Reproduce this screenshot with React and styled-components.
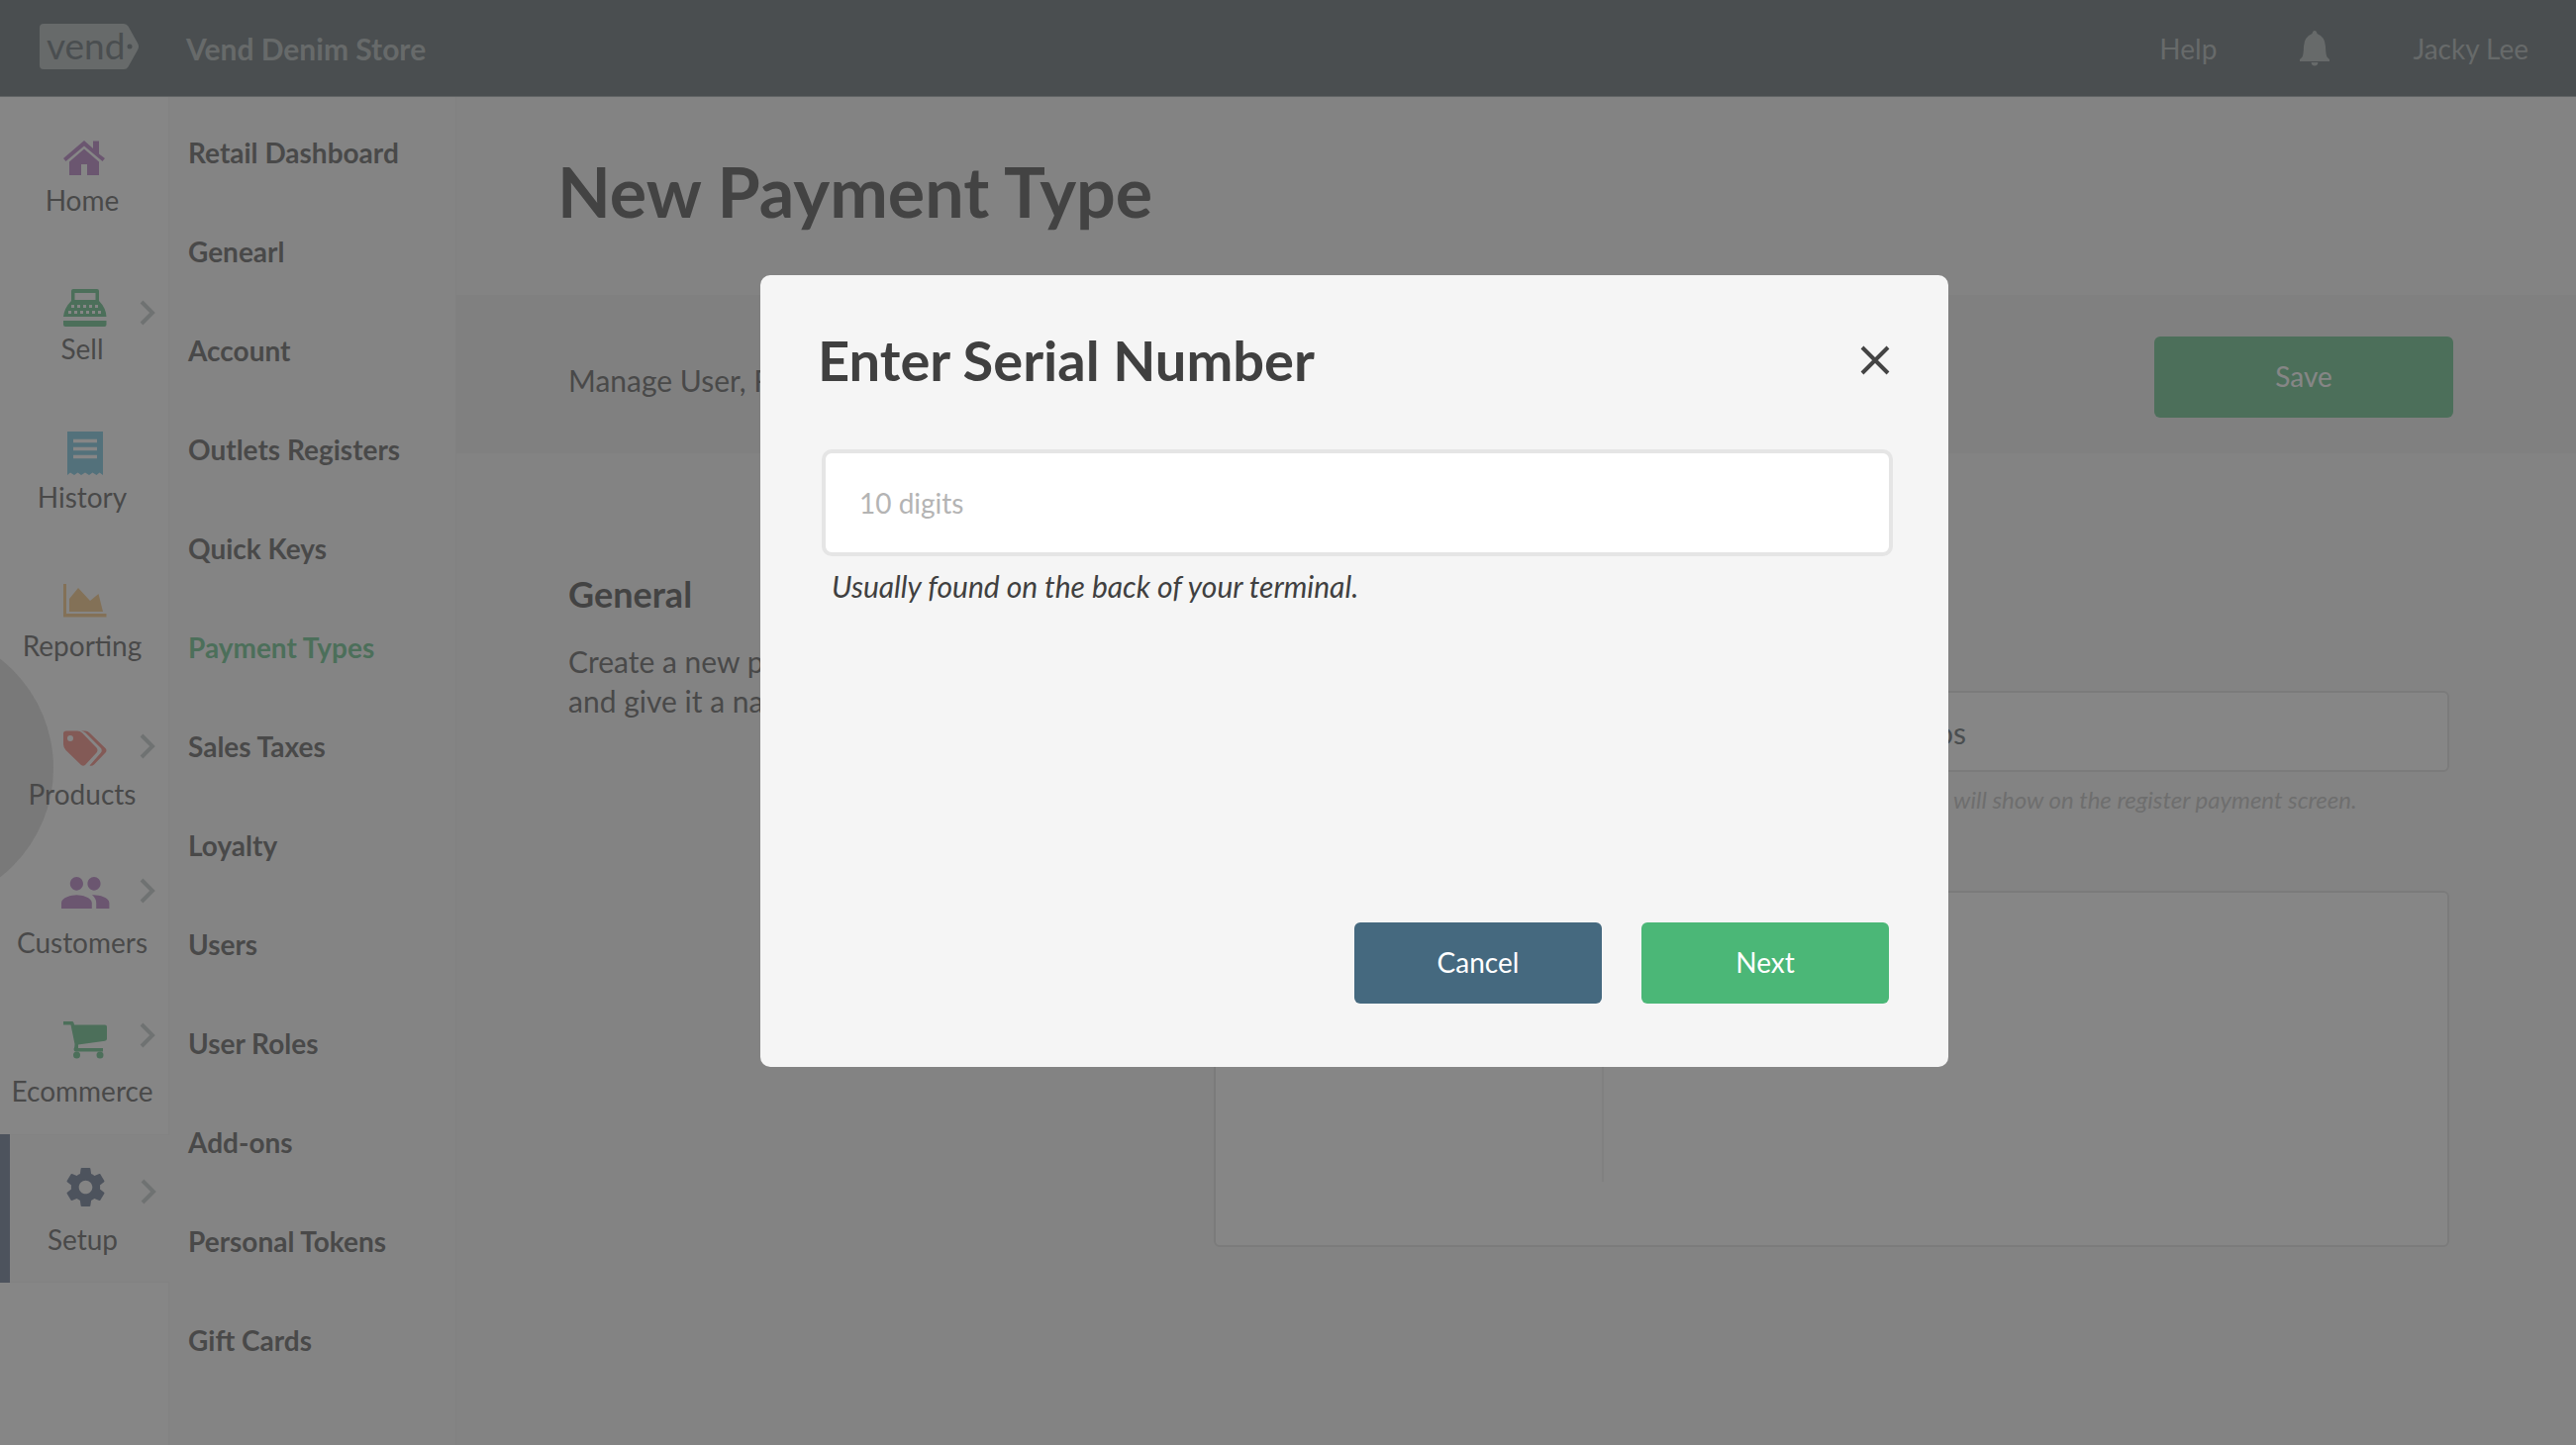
import React from "react";
import styled, { createGlobalStyle } from "styled-components";

const GlobalStyle = createGlobalStyle`
  *, *::before, *::after { box-sizing: border-box; }
  body { margin: 0; background: #f5f5f5; }
  body, button, input { font-family: Lato, "Liberation Sans", sans-serif; }
  h1, h2, p, ul { margin: 0; padding: 0; font-weight: 400; }
  ul { list-style: none; }
  a { color: inherit; text-decoration: none; }
  svg { display: block; }
`;

const Page = styled.div`
  min-height: 100vh;
  display: flex;
  flex-direction: column;
  color: #434343;
`;

const TopBar = styled.header`
  position: relative;
  z-index: 1;
  height: 98px;
  display: flex;
  align-items: center;
  padding: 0 48px 0 40px;
  background: #455157;
  border-bottom: 1px solid #8c969a;
  color: #9ea8a8;
`;

const Logo = styled.svg`
  width: 100px;
  height: 46px;
  margin-bottom: 3px;
`;

const StoreName = styled.span`
  margin-left: 48px;
  font-size: 30px;
  font-weight: 700;
`;

const TopLinks = styled.nav`
  margin-left: auto;
  display: flex;
  align-items: center;
  gap: 84px;
  font-size: 28px;
`;

const IconButton = styled.button`
  padding: 0;
  border: 0;
  background: none;
  color: inherit;
  cursor: pointer;
`;

const Body = styled.div`
  flex: 1;
  display: flex;
`;

const Rail = styled.nav`
  width: 171px;
  background: #ffffff;
  border-right: 1px solid #f2f2f2;
`;

const RailList = styled.ul`
  margin-top: -2px;
`;

const RailLink = styled.a`
  height: 150px;
  display: flex;
  flex-direction: column;
  align-items: center;
  padding-top: 32px;
  font-size: 28px;
  line-height: 36px;
  color: #434343;
  ${({ $active }) =>
    $active &&
    `
    width: 171px;
    background: #f8f8f8;
    box-shadow: inset 10px 0 0 #4f6080, inset 0 1px 0 #f2f2f2, inset 0 -1px 0 #f2f2f2;
  `}
`;

const RailLabel = styled.span`
  padding-right: 4px;
`;

const SubNav = styled.nav`
  width: 290px;
  padding: 6px 0 0 19px;
  background: #f9f9f9;
  border-right: 1px solid #f0f0f0;
`;

const SubLink = styled.a`
  display: block;
  font-size: 28px;
  font-weight: 700;
  line-height: 100px;
  color: ${({ $active }) => ($active ? "#4bb777" : "#434343")};
`;

const Main = styled.main`
  flex: 1;
  min-width: 0;
`;

const PageTitle = styled.h1`
  padding: 45px 102px 55px;
  font-size: 70px;
  line-height: 100px;
  font-weight: 700;
  color: #303030;
`;

const ActionBand = styled.section`
  display: flex;
  align-items: center;
  justify-content: space-between;
  padding: 42px 124px 36px 113px;
  background: #ececec;
  font-size: 30px;
`;

const BandText = styled.p`
  padding-top: 6px;
`;

const Button = styled.button`
  width: ${({ $wide }) => ($wide ? "302px" : "250px")};
  height: 82px;
  padding: 0 0 2px;
  border: 0;
  border-radius: 6px;
  background: ${({ $tone }) => ($tone === "slate" ? "#45697f" : "#4bb777")};
  color: #ffffff;
  font-size: 28px;
  cursor: pointer;
`;

const Section = styled.section`
  display: flex;
  padding: 112px 128px 0 113px;
`;

const Intro = styled.div`
  width: 652px;
`;

const SectionTitle = styled.h2`
  font-size: 36px;
  line-height: 60px;
  font-weight: 700;
  color: #303030;
`;

const SectionText = styled.p`
  margin-top: 18px;
  font-size: 30px;
  line-height: 40px;
`;

const Fields = styled.div`
  flex: 1;
  display: flex;
  flex-direction: column;
  align-items: flex-end;
  padding-top: 128px;
`;

const NameField = styled.div`
  width: 628px;
  display: flex;
  flex-direction: column;
`;

const NameInput = styled.input`
  width: 100%;
  height: 82px;
  padding: 2px 54px 0;
  border: 2px solid #dcdcdc;
  border-radius: 6px;
  background: #ffffff;
  color: #455157;
  font-size: 30px;
`;

const NameHint = styled.label`
  margin-top: 10px;
  padding-left: 20px;
  font-size: 24px;
  line-height: 36px;
  font-style: italic;
  color: #b4b4b4;
`;

const Panel = styled.div`
  align-self: stretch;
  height: 360px;
  margin-top: 74px;
  padding: 64px 0;
  border: 2px solid #dcdcdc;
  border-radius: 6px;
  background: #ffffff;
`;

const PanelSide = styled.div`
  width: 392px;
  height: 100%;
  border-right: 2px solid #ebebeb;
`;

const Overlay = styled.div`
  position: fixed;
  inset: 0;
  z-index: 2;
  overflow: hidden;
  display: flex;
  justify-content: center;
  align-items: flex-start;
  padding: 278px 0 0 134px;
  background: rgba(76, 76, 76, 0.68);
`;

const TouchSpot = styled.div`
  position: absolute;
  left: -226px;
  top: 636px;
  width: 280px;
  height: 280px;
  border-radius: 50%;
  background: rgba(70, 70, 70, 0.2);
`;

const Dialog = styled.form`
  width: 1200px;
  min-height: 800px;
  display: flex;
  flex-direction: column;
  padding: 46px 56px 64px 62px;
  border-radius: 10px;
  background: #f5f5f5;
  color: #404040;
`;

const DialogHead = styled.div`
  display: flex;
  align-items: center;
  justify-content: space-between;
  margin-left: -4px;
  padding-right: 3px;
`;

const DialogTitle = styled.h2`
  font-size: 56px;
  line-height: 80px;
  font-weight: 700;
`;

const SerialInput = styled.input`
  width: 100%;
  height: 108px;
  margin-top: 50px;
  padding: 0 34px;
  border: 4px solid #e5e5e5;
  border-radius: 10px;
  background: #ffffff;
  font-size: 28px;
  &::placeholder { color: #b4b4b4; opacity: 1; }
`;

const SerialHint = styled.label`
  margin-top: 10px;
  padding-left: 10px;
  font-size: 30px;
  line-height: 40px;
  font-style: italic;
`;

const DialogActions = styled.div`
  margin-top: auto;
  padding-right: 4px;
  display: flex;
  justify-content: flex-end;
  gap: 40px;
`;

const RailGraphic = styled.svg`
  width: 170px;
  height: 56px;
  flex: none;
`;

const keyRow = (xs, y) => xs.map((x) => <rect key={`${x}-${y}`} x={x} y={y} width="3" height="3" fill="#fff" />);

const railItems = [
  {
    label: "Home",
    color: "#aa6bbc",
    art: (
      <>
        <path d="M85 14 94 22V14.500H100V27.500L106 32 103.500 35 85 19.500 66.500 35 64 32Z" />
        <path d="M85 22.500 100 35.500V49H88V38H82V49H70V35.500Z" />
      </>
    ),
  },
  {
    label: "Sell",
    color: "#4bb777",
    chevron: 38,
    art: (
      <>
        <path fillRule="evenodd" d="M74 14H98Q100 14 100 16V26Q107 33 107.500 42H64Q65 33 72 26V16Q72 14 74 14ZM75.500 18V25H96.500V18Z" />
        <path d="M64 46H107.500V50Q107.500 52 105.500 52H66Q64 52 64 50Z" />
        {keyRow([72, 78, 84, 90, 96], 30)}
        {keyRow([69, 75, 81, 87, 93, 99], 36)}
      </>
    ),
  },
  {
    label: "History",
    color: "#60bedb",
    art: (
      <>
        <path d="M68 8H104V52L100.500 49.500 97.500 52 93.500 49.500 90 52 86 49.500 82 52 78.500 49.500 75 52 71 49.500 68 52Z" />
        <path d="M74 17.500H98M74 25.500H98M74 33.500H98" stroke="#fff" strokeWidth="3.500" />
      </>
    ),
  },
  {
    label: "Reporting",
    color: "#f5bf6f",
    art: (
      <>
        <path d="M64 12H67V42H107.500V45.500H64Z" />
        <path d="M70 40V27L79 16 91 29 99.500 22 104 40Z" />
      </>
    ),
  },
  {
    label: "Products",
    color: "#f5766a",
    chevron: 26,
    art: (
      <>
        <path
          fillRule="evenodd"
          d="M64 13Q64 10.500 67 10.500H78Q81 10.500 83 12.500L97.500 27.500Q99.500 30 97.500 32.500L86 45Q84 46.500 82 45L66.500 30Q64 27 64 24ZM71 15A3 3 0 1 0 71 21A3 3 0 1 0 71 15Z"
        />
        <path d="M82 10.500H86Q88.500 10.500 90.500 12.500L106.500 28Q108.500 30 106.500 32.500L95 44.500Q93 46.500 90.500 45.500L101.500 33Q104 30 101.500 27.500L86.500 12.500Q84.500 11 82 10.500Z" />
      </>
    ),
  },
  {
    label: "Customers",
    color: "#aa6bbc",
    chevron: 22,
    art: (
      <path
        transform="translate(59.8 -3.400) scale(2.200 2.280)"
        d="M16 11c1.660 0 2.990-1.340 2.990-3S17.660 5 16 5c-1.660 0-3 1.340-3 3s1.340 3 3 3zm-8 0c1.660 0 2.990-1.340 2.990-3S9.660 5 8 5C6.340 5 5 6.340 5 8s1.340 3 3 3zm0 2c-2.330 0-7 1.170-7 3.500V19h14v-2.500c0-2.330-4.670-3.500-7-3.500zm8 0c-.29 0-.62.02-.97.05 1.160.84 1.970 1.970 1.970 3.450V19h6v-2.500c0-2.330-4.670-3.500-7-3.500z"
      />
    ),
  },
  {
    label: "Ecommerce",
    color: "#4bb777",
    chevron: 18,
    art: (
      <>
        <path fillRule="evenodd" d="M64 4H73Q74.500 4 75 7.500H106Q108 7.500 108 9.500V21.500Q108 23.500 106 23.800L79 27.500V31H104V34.500H76.500Q74.500 34.500 74.500 32Q75.500 30 75.500 27L71.500 7.500H64Z" />
        <circle cx="77.500" cy="38" r="3.500" />
        <circle cx="101" cy="38" r="3.500" />
      </>
    ),
  },
  {
    label: "Setup",
    color: "#4f6080",
    chevron: 26,
    active: true,
    art: (
      <path
        transform="translate(62.100 -1.900) scale(1.950)"
        d="M19.430 12.980c.04-.32.07-.64.07-.98s-.03-.66-.07-.98l2.110-1.650c.19-.15.24-.42.12-.64l-2-3.460c-.12-.22-.39-.3-.61-.22l-2.490 1c-.52-.4-1.080-.73-1.690-.98l-.38-2.650C14.460 2.180 14.250 2 14 2h-4c-.25 0-.46.18-.49.42l-.38 2.650c-.61.25-1.170.59-1.690.98l-2.490-1c-.23-.09-.49 0-.61.22l-2 3.460c-.13.22-.07.49.12.64l2.110 1.650c-.04.32-.07.65-.07.98s.03.66.07.98l-2.110 1.650c-.19.15-.24.42-.12.64l2 3.460c.12.22.39.3.61.22l2.490-1c.52.4 1.080.73 1.690.98l.38 2.650c.03.24.24.42.49.42h4c.25 0 .46-.18.49-.42l.38-2.650c.61-.25 1.170-.59 1.690-.98l2.490 1c.23.09.49 0 .61-.22l2-3.460c.12-.22.07-.49-.12-.64l-2.110-1.650zM12 15.500c-1.930 0-3.500-1.570-3.500-3.500s1.570-3.500 3.500-3.500 3.500 1.570 3.500 3.500-1.570 3.500-3.500 3.500z"
      />
    ),
  },
];

const subItems = [
  "Retail Dashboard",
  "Genearl",
  "Account",
  "Outlets Registers",
  "Quick Keys",
  "Payment Types",
  "Sales Taxes",
  "Loyalty",
  "Users",
  "User Roles",
  "Add-ons",
  "Personal Tokens",
  "Gift Cards",
];

function RailItem({ item }) {
  return (
    <li>
      <RailLink href="#" $active={item.active} aria-current={item.active ? "page" : undefined}>
        <RailGraphic viewBox="0 0 170 56" fill={item.color} aria-hidden="true">
          {item.art}
          {item.chevron && (
            <path
              d={`M143 ${item.chevron - 11}L154 ${item.chevron}L143 ${item.chevron + 11}`}
              fill="none"
              stroke="#b9c1c2"
              strokeWidth="4"
            />
          )}
        </RailGraphic>
        <RailLabel>{item.label}</RailLabel>
      </RailLink>
    </li>
  );
}

export default function App() {
  return (
    <>
      <GlobalStyle />
      <Page>
        <TopBar>
          <Logo viewBox="0 0 100 46" role="img" aria-label="vend">
            <path d="M4 0H85Q88 0 89.500 2.500L99 19.500Q101 23 99 26.500L89.500 43.500Q88 46 85 46H4Q0 46 0 42V4Q0 0 4 0Z" fill="#9ea8a8" />
            <text x="7" y="36" fontSize="37" fill="#455157">vend</text>
            <circle cx="91" cy="23" r="2.500" fill="#455157" />
          </Logo>
          <StoreName>Vend Denim Store</StoreName>
          <TopLinks>
            <a href="#">Help</a>
            <IconButton type="button" aria-label="Notifications">
              <svg width="30" height="36" viewBox="0 0 30 36" fill="currentColor">
                <path d="M15 0Q17 0 17.500 3Q25.500 6 26 16Q26.200 24 27.500 26.500Q29 28 30 29V31H0V29Q1 28 2.500 26.500Q3.800 24 4 16Q4.500 6 12.500 3Q13 0 15 0ZM11.500 32H18.500Q18 35.500 15 35.500Q12 35.500 11.500 32Z" />
              </svg>
            </IconButton>
            <a href="#">Jacky Lee</a>
          </TopLinks>
        </TopBar>
        <Body>
          <Rail>
            <RailList>
              {railItems.map((item) => (
                <RailItem key={item.label} item={item} />
              ))}
            </RailList>
          </Rail>
          <SubNav>
            {subItems.map((label) => (
              <SubLink key={label} href="#" $active={label === "Payment Types"}>
                {label}
              </SubLink>
            ))}
          </SubNav>
          <Main>
            <PageTitle>New Payment Type</PageTitle>
            <ActionBand>
              <BandText>Manage User, Roles</BandText>
              <Button type="button" $wide>Save</Button>
            </ActionBand>
            <Section>
              <Intro>
                <SectionTitle>General</SectionTitle>
                <SectionText>
                  Create a new payment
                  <br />
                  and give it a name.
                </SectionText>
              </Intro>
              <Fields>
                <NameField>
                  <NameInput id="type-name" defaultValue="Eftpos" />
                  <NameHint htmlFor="type-name">This name will show on the register payment screen.</NameHint>
                </NameField>
                <Panel>
                  <PanelSide />
                </Panel>
              </Fields>
            </Section>
          </Main>
        </Body>
      </Page>
      <Overlay>
        <TouchSpot />
        <Dialog role="dialog" aria-modal="true" aria-labelledby="dialog-title">
          <DialogHead>
            <DialogTitle id="dialog-title">Enter Serial Number</DialogTitle>
            <IconButton type="button" aria-label="Close">
              <svg width="30" height="30" viewBox="0 0 30 30">
                <path d="M2 2 28 28M28 2 2 28" stroke="#434343" strokeWidth="4" />
              </svg>
            </IconButton>
          </DialogHead>
          <SerialInput id="serial" placeholder="10 digits" />
          <SerialHint htmlFor="serial">Usually found on the back of your terminal.</SerialHint>
          <DialogActions>
            <Button type="button" $tone="slate">Cancel</Button>
            <Button type="button">Next</Button>
          </DialogActions>
        </Dialog>
      </Overlay>
    </>
  );
}
